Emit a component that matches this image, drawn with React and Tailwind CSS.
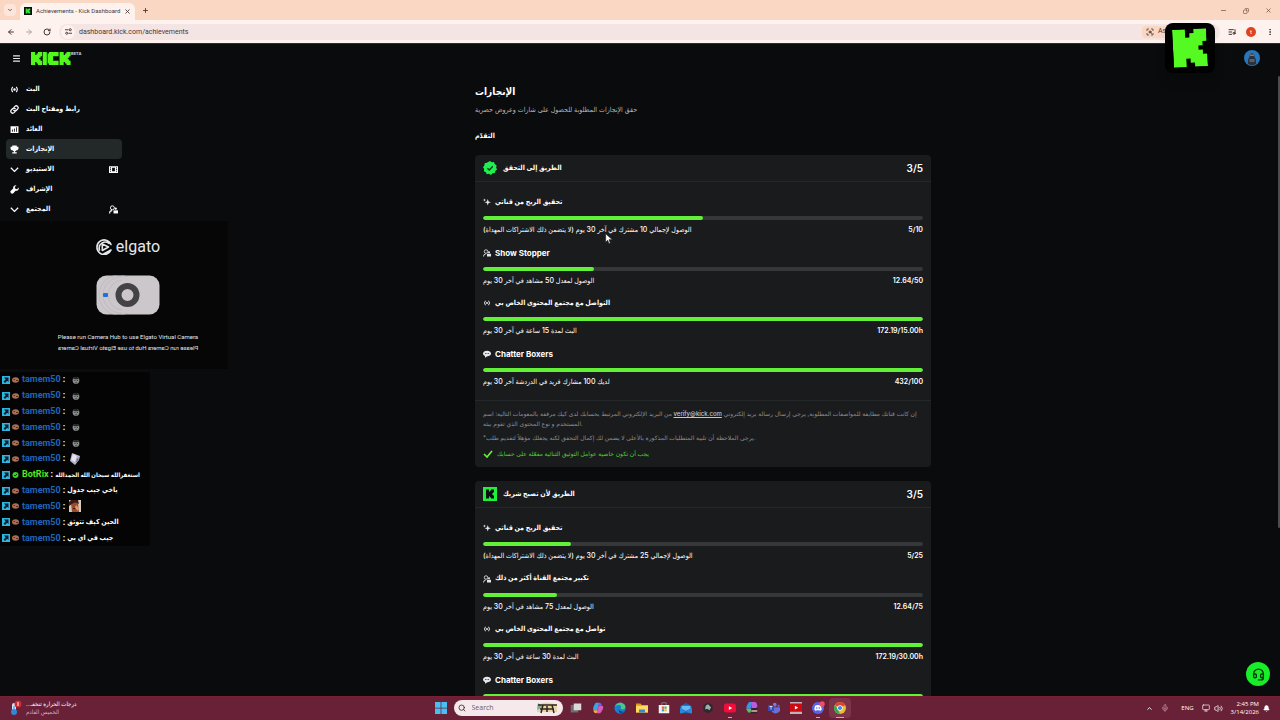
import {
  ArrowLeft, ArrowRight, RotateCw, ChevronDown, ChevronUp, X, Plus, Minus, Menu, Copy, Search,
  Mic, Volume2, Headset, ScanSearch, ListMusic, EllipsisVertical, Monitor, Bell,
} from 'lucide-react';

const K_PATH = 'M0 0h3v2h1V1h1V0h3v3H7v1H6v1h1v1h1v3H5V8H4V7H3v2H0z';

const navItems = [
  { label: 'البث', icon: 'live' },
  { label: 'رابط ومفتاح البث', icon: 'link' },
  { label: 'العائد', icon: 'chart' },
  { label: 'الإنجازات', icon: 'trophy', active: true },
  { label: 'الاستيديو', icon: 'chevron', extra: 'studio' },
  { label: 'الإشراف', icon: 'wrench' },
  { label: 'المجتمع', icon: 'chevron', extra: 'people' },
];

const verifiedTasks = [
  { icon: 'sparkle', title: 'تحقيق الربح من قناتي', text: 'الوصول لإجمالي 10 مشترك في آخر 30 يوم (لا يتضمن ذلك الاشتراكات المهداة)', value: '5/10', percent: 50 },
  { icon: 'people', title: 'Show Stopper', text: 'الوصول لمعدل 50 مشاهد في آخر 30 يوم', value: '12.64/50', percent: 25.28 },
  { icon: 'live', title: 'التواصل مع مجتمع المحتوى الخاص بي', text: 'البث لمدة 15 ساعة في آخر 30 يوم', value: '172.19/15.00h', percent: 100 },
  { icon: 'chat', title: 'Chatter Boxers', text: 'لديك 100 مشارك فريد في الدردشة آخر 30 يوم', value: '432/100', percent: 100 },
];

const partnerTasks = [
  { icon: 'sparkle', title: 'تحقيق الربح من قناتي', text: 'الوصول لإجمالي 25 مشترك في آخر 30 يوم (لا يتضمن ذلك الاشتراكات المهداة)', value: '5/25', percent: 20 },
  { icon: 'people', title: 'تكبير مجتمع القناة أكثر من ذلك', text: 'الوصول لمعدل 75 مشاهد في آخر 30 يوم', value: '12.64/75', percent: 16.85 },
  { icon: 'live', title: 'تواصل مع مجتمع المحتوى الخاص بي', text: 'البث لمدة 30 ساعة في آخر 30 يوم', value: '172.19/30.00h', percent: 100 },
  { icon: 'chat', title: 'Chatter Boxers', percent: 100 },
];

const messages = [
  { emote: 'face' },
  { emote: 'face' },
  { emote: 'face' },
  { emote: 'face' },
  { emote: 'face' },
  { emote: 'paper' },
  { bot: true, text: 'استغفرالله سبحان الله الحمدالله' },
  { text: 'ياخي جيب جدول' },
  { emote: 'photo' },
  { text: 'الحين كيف تتوثق' },
  { text: 'جيب في اي بي' },
];

function Glyph({ name, className }) {
  const shapes = {
    live: (
      <g fill="none" stroke="currentColor" strokeWidth="2">
        <path d="M5 3.500Q1 8 5 12.500M11 3.500Q15 8 11 12.500" />
        <circle cx="8" cy="8" r="1.200" fill="currentColor" />
      </g>
    ),
    link: (
      <g fill="none" stroke="currentColor" strokeWidth="2.200" strokeLinecap="round">
        <path d="M7 4.200l1.800-1.800a3.400 3.400 0 0 1 4.800 4.800L11.500 9.300a3.400 3.400 0 0 1-4.800 0" />
        <path d="M9 11.800l-1.800 1.800a3.400 3.400 0 0 1-4.800-4.800L4.500 6.700a3.400 3.400 0 0 1 4.800 0" />
      </g>
    ),
    chart: (
      <path fill="currentColor" fillRule="evenodd" d="M1 2h14v12H1zM3.500 8v4H5V8zM7 6v6h1.500V6zM11 4v8h1.500V4z" />
    ),
    trophy: (
      <path fill="currentColor" d="M4 1h8v2h3v3c0 2-1.500 3-3.500 3.200-.6 1-1.400 1.600-2.500 1.800v2h3v2H4v-2h3v-2c-1.100-.2-1.900-.8-2.500-1.800C2.500 9 1 8 1 6V3h3z" />
    ),
    chevron: <path fill="none" stroke="currentColor" strokeWidth="2.200" d="M1.500 5 8 11.500 14.500 5" />,
    wrench: (
      <path fill="currentColor" d="M15.500 4.500 12.500 7.500 9.500 6.500 8.500 3.500 11.500.5C8.500-.3 5 2 5.700 6L.5 11 1.500 14.500 5 15.500l5-5.200c4 .7 6.300-2.800 5.500-5.800z" />
    ),
    studio: (
      <path fill="currentColor" fillRule="evenodd" d="M0 2h16v12H0zM2 4v2h1.500V4zM2 7v2h1.500V7zM2 10v2h1.500v-2zM12.500 4v2H14V4zM12.500 7v2H14V7zM12.500 10v2H14v-2zM5.500 5v6h5V5z" />
    ),
    people: (
      <g>
        <circle cx="6" cy="5" r="3.500" fill="none" stroke="currentColor" strokeWidth="1.700" />
        <path d="M1 15q0-5 4.500-5" fill="none" stroke="currentColor" strokeWidth="1.800" />
        <circle cx="12" cy="6.500" r="2" fill="currentColor" />
        <path fill="currentColor" d="M8 9.500h8V15H8z" />
      </g>
    ),
    sparkle: (
      <path fill="currentColor" d="M9.500 2l1.700 4.800L16 8.500l-4.800 1.700L9.500 15l-1.700-4.800L3 8.500l4.800-1.700zM3 1l.8 2.200L6 4l-2.200.8L3 7l-.8-2.200L0 4l2.200-.8z" />
    ),
    chat: (
      <path fill="currentColor" fillRule="evenodd" d="M8 1.500c4.700 0 8 2.300 8 5.700s-3.300 5.600-8 5.600L4 15.500v-3.300C1.500 11.200 0 9.500 0 7.200c0-3.400 3.300-5.700 8-5.700zM4 6.500V8h1.800V6.500zM7 6.500V8h1.800V6.500zM10 6.500V8h1.800V6.500z" />
    ),
  };
  return <svg viewBox="0 0 16 16" className={`shrink-0 ${className}`} aria-hidden="true">{shapes[name]}</svg>;
}

function KickMark({ className }) {
  return (
    <svg viewBox="0 0 14 14" className={className} aria-hidden="true">
      <path fill="#1ef03c" d="M0 0h14v14H0z" />
      <path fill="#0b0e0f" d={K_PATH} transform="translate(3 2.500)" />
    </svg>
  );
}

function BrowserBar() {
  return (
    <header className="shrink-0 text-[#4a3533] font-['Roboto','DejaVu_Sans',sans-serif]">
      <div className="flex h-5 items-end bg-[#fad7c2] pl-1">
        <button aria-label="Search tabs" className="mb-1 flex h-3 w-3 items-center justify-center rounded bg-[#fce6dc]">
          <ChevronDown size={6} strokeWidth={3} />
        </button>
        <div className="ml-1 flex h-[17px] items-center rounded-t-md bg-[#fef2ef] px-1 pb-px">
          <svg viewBox="0 0 14 14" className="size-2"><path fill="#081008" d="M0 0h14v14H0z" /><path fill="#2ee83a" d={K_PATH} transform="translate(3 2.500)" /></svg>
          <span className="ml-1 text-[6px] leading-[10px]">Achievements - Kick Dashboard</span>
          <button aria-label="Close tab" className="ml-1"><X size={7} strokeWidth={3} /></button>
        </div>
        <button aria-label="New tab" className="mb-1.5 ml-[7px]"><Plus size={7} strokeWidth={3} /></button>
        <div className="mb-1.5 ml-auto flex items-center gap-4 pr-2">
          <button aria-label="Minimize"><Minus size={7} /></button>
          <button aria-label="Restore"><Copy size={6} className="-scale-x-100" /></button>
          <button aria-label="Close"><X size={7} /></button>
        </div>
      </div>
      <div className="flex h-6 items-center border-b border-[#253033] bg-[#fef2ef] pl-[7px] pr-1.5">
        <button aria-label="Back"><ArrowLeft size={8} strokeWidth={3} /></button>
        <button aria-label="Forward" className="ml-2.5 text-[#b5a09d]"><ArrowRight size={8} strokeWidth={3} /></button>
        <button aria-label="Reload" className="ml-2.5"><RotateCw size={8} strokeWidth={3} /></button>
        <div className="ml-2 flex h-4 flex-1 items-center rounded-full bg-[#f4e4e3] px-0.5">
          <button aria-label="Site information" className="flex size-3.5 items-center justify-center rounded-full bg-[#fef2ef]">
            <svg viewBox="0 0 12 12" className="size-[7px]" fill="none" stroke="currentColor" strokeWidth="1.600"><path d="M6 3H0M6 9h6" /><circle cx="9" cy="3" r="1.800" /><circle cx="3" cy="9" r="1.800" /></svg>
          </button>
          <input aria-label="Address" readOnly defaultValue="dashboard.kick.com/achievements" className="ml-1 min-w-0 flex-1 bg-transparent text-[7px] leading-[12px] outline-none" />
          <button className="mr-9 flex h-3 w-10 items-center gap-1 overflow-hidden rounded bg-[#fad7c2] px-1 text-[7px]"><ScanSearch size={8} strokeWidth={3} className="shrink-0" />Ask</button>
        </div>
        <button aria-label="Media" className="ml-2"><ListMusic size={8} strokeWidth={3} /></button>
        <button aria-label="Profile" className="ml-2.5 size-2.5 rounded-full bg-[#e0431d] text-[6px] leading-[10px] text-white">t</button>
        <button aria-label="More" className="ml-2.5"><EllipsisVertical size={8} strokeWidth={3} /></button>
      </div>
    </header>
  );
}

function SiteHeader() {
  return (
    <div className="flex h-7 items-center pl-3 pr-5">
      <button aria-label="Menu" className="text-gray-200"><Menu size={9} strokeWidth={3} /></button>
      <a href="#home" aria-label="Kick" className="ml-2.5 flex items-start">
        <svg viewBox="0 0 29 9" preserveAspectRatio="none" className="h-[13px] w-10" fill="#50f81b">
          <path d={K_PATH} />
          <path d="M8.500 0h3v9h-3zM13 0h7v3h-4v3h4v3h-7V8h-1V1h1z" />
          <path d={K_PATH} transform="translate(20.700 0)" />
        </svg>
        <span className="text-[4px] font-bold leading-[4px] text-gray-300">BETA</span>
      </a>
      <button aria-label="Account" className="ml-auto">
        <svg viewBox="0 0 16 16" className="size-4">
          <circle cx="8" cy="8" r="8" fill="#2876bb" />
          <path fill="#2d3038" d="M4 14c-.5-3 .4-6 1.500-7 0-5 5-5 5 0 1.100 1 2 4 1.500 7-2.500 1.500-5.500 1.500-8 0z" />
          <path fill="#8f7466" d="M6 4.500h4V6H6z" />
          <path fill="#55606c" d="M5.500 9h5v3h-5z" />
        </svg>
      </button>
    </div>
  );
}

function Sidebar() {
  return (
    <nav className="w-32 shrink-0 px-1.5 pt-[7px]">
      {navItems.map((item) => (
        <a
          key={item.label}
          href="#nav"
          className={`flex h-5 items-center rounded-sm px-1 text-[7px] font-bold leading-[12px] text-white ${item.active ? 'bg-[#232829]' : ''}`}
        >
          <Glyph name={item.icon} className="size-[9px]" />
          <span className="ml-[7px]">{item.label}</span>
          {item.extra && <Glyph name={item.extra} className="ml-auto size-[9px]" />}
        </a>
      ))}
    </nav>
  );
}

function Task({ task }) {
  return (
    <div>
      <h3 className="flex h-4 items-center gap-1 font-bold text-white">
        <Glyph name={task.icon} className="size-2 text-gray-200" />
        <span className={/[a-z]/.test(task.title) ? 'text-[8px]' : 'text-[7px]'}>{task.title}</span>
      </h3>
      <div role="progressbar" aria-label={task.title} aria-valuenow={task.percent} className="mt-1.5 h-1 overflow-hidden rounded-full bg-[#353738]">
        <div className="h-full rounded-full bg-[#62f136]" style={{ width: `${task.percent}%` }} />
      </div>
      {task.text && (
        <div className="mt-1 flex items-center justify-between text-[7px] leading-[12px] text-white">
          <p className="font-medium">{task.text}</p>
          <p className="font-semibold">{task.value}</p>
        </div>
      )}
    </div>
  );
}

function Card({ icon, title, tasks, children }) {
  return (
    <section className="rounded-sm bg-[#191b1d]">
      <div className="flex h-[27px] items-center border-b border-[#252829] px-2 text-white">
        {icon}
        <h2 className="ml-1.5 text-[7px] font-bold">{title}</h2>
        <span className="ml-auto text-[10px] font-semibold">3/5</span>
      </div>
      <div className="grid min-h-[214px] grid-cols-1 grid-rows-4 px-2 pt-3">
        {tasks.map((task) => <Task key={task.title} task={task} />)}
      </div>
      {children}
    </section>
  );
}

function VerifiedBadge() {
  return (
    <svg viewBox="0 0 16 16" className="size-3.5" aria-hidden="true">
      <path fill="#20ef50" d="M8 0l2 1.500 2.500-.3.900 2.300L15.600 5 15 7.500l1 2.300-1.900 1.600-.6 2.400-2.500.2L9 16l-2.200-1.400-2.400.5-1.200-2.200L1 11.600l.3-2.500L0 7l1.600-1.900.3-2.500 2.500-.5z" />
      <path fill="none" stroke="#10351a" strokeWidth="1.500" d="M5 8.200l2.200 2.100L11.200 6" />
    </svg>
  );
}

function CameraPanel() {
  return (
    <div className="absolute left-0 top-[177px] flex h-[148px] w-[228px] flex-col items-center bg-[#060607] pl-7 pt-4 text-gray-200 font-['Roboto',sans-serif]">
      <div className="flex h-5 items-center gap-1">
        <svg viewBox="0 0 16 16" className="size-4" fill="none" stroke="currentColor" strokeWidth="1.600" strokeLinecap="round" strokeLinejoin="round">
          <path d="M15 5.500A7.300 7.300 0 1 0 15 11L8 14.800M13 4.500A6 6 0 0 0 3.500 11" />
          <path d="M6.300 5v6.500L12.500 8z" />
        </svg>
        <span className="text-[16px] leading-[20px]">elgato</span>
      </div>
      <svg viewBox="0 0 64 40" className="mt-[18px] h-10 w-16">
        <rect x=".5" y=".5" width="63" height="39" rx="10" fill="#cbc7ca" />
        <g fill="none" stroke="#b8b4b7" strokeWidth=".6"><circle cx="27" cy="20" r="15" /><circle cx="25" cy="20" r="18" /><circle cx="23" cy="20" r="20" /></g>
        <path d="M26 2h30q6 6 6 18t-8 18H26z" fill="#cbc7ca" />
        <circle cx="31.500" cy="20" r="9" fill="none" stroke="#434244" strokeWidth="6" />
        <rect x="7" y="18" width="5" height="4" rx="1" fill="#1f6fe0" />
      </svg>
      <p className="mt-4 text-[6px] leading-[11px]">Please run Camera Hub to use Elgato Virtual Camera</p>
      <p className="-scale-x-100 text-[6px] leading-[11px]">Please run Camera Hub to use Elgato Virtual Camera</p>
    </div>
  );
}

function Emote({ name }) {
  if (name === 'face') {
    return (
      <svg viewBox="0 0 12 12" className="ml-1.5 size-2.5">
        <circle cx="6" cy="6.500" r="4" fill="#8e8e8e" />
        <path fill="#252525" d="M2 4q4-4 8 0L8 5H4zM4 6h1.500v1H4zM7 6h1.500v1H7zM4.500 9q2-2 3.500 0z" />
      </svg>
    );
  }
  if (name === 'paper') {
    return (
      <svg viewBox="0 0 12 12" className="ml-1 size-3">
        <path fill="#b6b3c9" d="M3 0l8 3-1 4-4 5-5-4z" />
        <path fill="#e4e2ee" d="M4 1l4 2-2 6-4-2z" />
        <path fill="#77748c" d="M8 5l2 1-3 4z" />
      </svg>
    );
  }
  return (
    <svg viewBox="0 0 12 12" className="ml-1 size-3">
      <path fill="#d8c8bd" d="M0 0h12v12H0z" />
      <path fill="#9c4a2c" d="M2 3q3-4 7 0l1 9H3z" />
      <path fill="#3a1c15" d="M2 0h7l1 4q-4-3-7 0L0 6V2zM4 8h4v1H4z" />
      <path fill="#d99a70" d="M7 5l3 3-1 3-3-3z" />
    </svg>
  );
}

function Chat() {
  return (
    <ul className="absolute left-0 top-[328px] flex h-[174px] w-[150px] flex-col bg-[#040405] pl-0.5 font-['Roboto','DejaVu_Sans_Condensed','DejaVu_Sans',sans-serif]">
      {messages.map((msg, i) => (
        <li key={i} className="flex min-h-0 flex-1 items-center text-[9px] font-bold leading-[15px] text-white">
          <svg viewBox="0 0 8 8" className="size-2 shrink-0"><path fill="#2fb5df" d="M0 0h8v8H0z" /><path fill="#08202c" d="M2 1.500h4.500V6L5.200 4.800 3 7 1.500 5.500l2.200-2z" /></svg>
          {msg.bot ? (
            <svg viewBox="0 0 8 8" className="ml-0.5 size-2 shrink-0"><circle cx="3.500" cy="4" r="3" fill="#39cf26" /><path d="M2 4l1 1 2-2" fill="none" stroke="#0a330a" /></svg>
          ) : (
            <svg viewBox="0 0 8 8" className="ml-0.5 size-2 shrink-0"><ellipse cx="3.500" cy="4" rx="3.500" ry="2.700" fill="#a96f55" /><path d="M1.500 3.500h1.500M4 4.500h2" stroke="#59301f" /></svg>
          )}
          <span className={`ml-0.5 ${msg.bot ? 'text-[#53ea20]' : 'text-[#1f64b9]'}`}>{msg.bot ? 'BotRix' : 'tamem50'}</span>
          <span className="ml-0.5">:</span>
          {msg.emote ? <Emote name={msg.emote} /> : <span className={`ml-0.5 whitespace-nowrap ${msg.bot ? 'text-[6px]' : 'text-[7px]'}`}>{msg.text}</span>}
        </li>
      ))}
    </ul>
  );
}

function AppIcon({ name }) {
  const art = {
    windows: <path fill="#49bff2" d="M0 0h7.500v7.500H0zM8.500 0H16v7.500H8.500zM0 8.500h7.500V16H0zM8.500 8.500H16V16H8.500z" />,
    tasks: <g><path fill="#6d6d72" d="M1 4h10v10H1z" /><path fill="#dadada" d="M5 2h10v9H5z" /></g>,
    copilot: <g><path fill="#37a5ec" d="M5 1h5L7 11H2Q0 8 5 1z" /><path fill="#f3b33f" d="M2 11h6l-2 4q-4 0-4-4z" /><path fill="#d95ab8" d="M9 5h5q3 2-3 10H6z" /><path fill="#6d65ee" d="M9 1q4 0 4 4H8z" /></g>,
    edge: <g><circle cx="8" cy="8" r="7.500" fill="#1780cf" /><path fill="#48c985" d="M1 6Q4 0 10 1q6 2 5 7-2 3-6 1 2-5-3-5-3 0-5 2z" /><path fill="#0b3f80" d="M6 8q0 5 7 5-7 5-7-5z" /></g>,
    folder: <g><path fill="#d99b1c" d="M0 2h6l2 2h8v10H0z" /><path fill="#ffd85e" d="M0 5h16v9H0z" /><path fill="#3889cf" d="M4 10h8v4H4z" /></g>,
    store: <g><path fill="#f6f4f5" d="M1 4h14v11H1z" /><path d="M5 4V1h6v3" stroke="#8d8b90" fill="none" /><path fill="#e85a3a" d="M5 6h3v3H5z" /><path fill="#65ac40" d="M8.500 6h3v3h-3z" /><path fill="#359bdc" d="M5 9.500h3v3H5z" /><path fill="#f4bc35" d="M8.500 9.500h3v3h-3z" /></g>,
    mail: <g><path fill="#1c5fae" d="M0 6l8-5 8 5v9H0z" /><path fill="#64bbf2" d="M2 5h12v4l-6 3-6-3z" /><path fill="#2f87db" d="M0 8l8 5-6 2H0zM16 8l-8 5 6 2h2z" /></g>,
    dark: <g><path fill="#272a2e" d="M8 1l6 3v8l-6 3-6-3V4z" /><path fill="#a6acae" d="M8 3l4 4-2 4-3-2-3 1 1-5z" /></g>,
    youtube: <g><rect y="2" width="16" height="12" rx="3" fill="#ef0e3a" /><path fill="#fff" d="M6.500 5.500v5L11 8z" /></g>,
    office: <g><path fill="#3c91e8" d="M4 0h5L6 9H1q-2-2 3-9z" /><path fill="#b75de4" d="M8 0h4q3 1 3 6l-3 4H7z" /><path fill="#55c06b" d="M0 9h7l-1 5H3z" /><path fill="#2d2730" d="M7 8h8v7H7z" /><path fill="#eab7a6" d="M7 11h8v2H7z" /></g>,
    teams: <g><circle cx="9" cy="3.500" r="2.500" fill="#767ee6" /><circle cx="14" cy="5" r="1.500" fill="#6269cf" /><path fill="#6670d8" d="M5 7h11v5q-5 6-11 1z" /><path fill="#3b48ae" d="M0 4h8v8H0z" /><path stroke="#fff" d="M2 6h4M4 6v4" /></g>,
    tv: <g><path fill="#b9b4b7" d="M0 0h16v16H0z" /><path fill="#ce0910" d="M0 2h16v11H0z" /><path fill="#fff" d="M6.500 5v5L11 7.500z" /></g>,
    discord: <g><circle cx="8" cy="8" r="8" fill="#5a64ea" /><path fill="#fff" d="M4 5q4-2 8 0l1 5-2 2-1-1H6l-1 1-2-2z" /><circle cx="6.300" cy="8" r="1" fill="#5a64ea" /><circle cx="9.700" cy="8" r="1" fill="#5a64ea" /><circle cx="13.500" cy="2.500" r="3.500" fill="#ed5062" /></g>,
    chrome: <g><circle cx="8" cy="8" r="8" fill="#e8bd2e" /><path fill="#df4334" d="M8 8L1 4q3-4 7-4 5 0 7 4z" /><path fill="#3aa65b" d="M1 4l4.500 6L8 16Q0 15 0 8q0-2 1-4z" /><circle cx="8" cy="8" r="3.700" fill="#fff" /><circle cx="8" cy="8" r="2.800" fill="#4488ee" /></g>,
  };
  return <svg viewBox="0 0 16 16" className="size-3 overflow-visible" aria-hidden="true">{art[name]}</svg>;
}

const apps = ['tasks', 'copilot', 'edge', 'folder', 'store', 'mail', 'dark', 'youtube', 'office', 'teams', 'tv', 'discord', 'chrome'];
const running = { youtube: 'w-1', discord: 'w-1', chrome: 'w-2' };

function Taskbar() {
  return (
    <footer className="grid h-6 shrink-0 grid-cols-[1fr_auto_1fr] items-center border-t border-[#7a2035] bg-[#692138] pb-px text-white font-['Open_Sans','DejaVu_Sans_Condensed','DejaVu_Sans',sans-serif]">
      <div className="flex items-center pl-2.5">
        <svg viewBox="0 0 12 16" className="h-4 w-3">
          <rect x="2" y="3" width="4" height="9" rx="2" fill="#cfe2f3" /><circle cx="4" cy="12" r="3" fill="#3287d8" /><path d="M4 6v6" stroke="#3287d8" /><circle cx="8" cy="4" r="3.500" fill="#d02a2e" /><path stroke="#fff" d="M8 2v4" />
        </svg>
        <div className="ml-1 text-[6px] leading-[8px]">
          <p dir="rtl">درجات الحرارة تنخفـ...</p>
          <p className="text-[#dfa9b5]">الخميس القادم</p>
        </div>
      </div>
      <div className="flex items-center">
        <button aria-label="Start" className="flex w-[22px] justify-center"><AppIcon name="windows" /></button>
        <label className="mx-0.5 flex h-4 w-[109px] items-center rounded-full bg-[#f5e9ec] pl-1 pr-1 text-[#3b2a30]">
          <Search size={8} strokeWidth={2.500} />
          <input aria-label="Search" placeholder="Search" className="ml-1.5 w-0 min-w-0 flex-1 bg-transparent text-[7px] leading-[12px] outline-none placeholder:text-[#6d595f]" />
          <svg viewBox="0 0 24 12" className="h-3 w-6"><path fill="#e9d6a6" d="M2 3q10-5 20 0v7H2z" /><path fill="#7cb09d" d="M3 1l5 4-6 3z" /><path stroke="#30261f" strokeWidth="1.500" fill="none" d="M3 3h19M8 3l-2 8M12 4v6M17 3l2 8M5 7h14" /></svg>
        </label>
        {apps.map((app) => (
          <button key={app} aria-label={app} className={`relative flex h-5 w-[22px] items-center justify-center rounded-sm ${app === 'chrome' ? 'bg-[#7b3449]' : ''}`}>
            <AppIcon name={app} />
            {running[app] && <span className={`absolute bottom-0 h-px bg-[#d9a5b1] ${running[app]}`} />}
          </button>
        ))}
      </div>
      <div className="flex items-center justify-end pr-2.5 text-[6px]">
        <button aria-label="Hidden icons"><ChevronUp size={7} strokeWidth={3} /></button>
        <Mic size={8} className="ml-2 text-[#d3a0aa]" />
        <span className="ml-3">ENG</span>
        <Monitor size={8} className="ml-2" />
        <Volume2 size={9} className="ml-1" />
        <div className="ml-2 text-right leading-[8px]">
          <p>2:45 PM</p>
          <p>3/14/2026</p>
        </div>
        <Bell size={7} fill="currentColor" className="ml-1" />
      </div>
    </footer>
  );
}

export default function App() {
  return (
    <div className="relative flex h-screen flex-col overflow-hidden bg-[#0a0b0d] font-['Inter','DejaVu_Sans_Condensed','DejaVu_Sans',sans-serif]">
      <BrowserBar />
      <div className="relative min-h-0 flex-1 overflow-hidden">
        <SiteHeader />
        <div className="flex">
          <Sidebar />
          <main className="min-w-0 flex-1 pr-0.5 pt-[11px]">
            <div className="mx-auto max-w-[456px]">
              <h1 className="text-[10px] font-bold leading-[16px] text-white">الإنجازات</h1>
              <p className="mt-1 text-[7px] leading-[14px] text-[#b4b8bb]">حقق الإنجازات المطلوبة للحصول على شارات وعروض حصرية</p>
              <h2 className="mt-3 text-[7px] font-bold leading-[14px] text-white">التقدّم</h2>
              <div className="mt-3 flex flex-col gap-3.5">
                <Card icon={<VerifiedBadge />} title="الطريق إلى التحقق" tasks={verifiedTasks}>
                  <div className="mt-1 border-t border-[#252829] px-2 pb-2 pt-2 text-[6px] leading-[10px] text-[#8b8f92] font-['Inter','DejaVu_Sans',sans-serif]">
                    <p dir="rtl" className="text-left">
                      إن كانت قناتك مطابقة للمواصفات المطلوبة, يرجى إرسال رسالة بريد إلكتروني <a href="mailto:verify@kick.com" className="font-medium text-[#c5c9cc] underline">verify@kick.com</a> من البريد الإلكتروني المرتبط بحسابك لدى كيك مرفقة بالمعومات التالية: اسم
                    </p>
                    <p>المستخدم و نوع المحتوى الذي تقوم ببثه.</p>
                    <p className="mt-1">*يرجى الملاحظة أن تلبية المتطلبات المذكورة بالأعلى لا يضمن لك إكمال التحقق لكنه يجعلك مؤهلاً لتقديم طلب.</p>
                    <p className="mt-1.5 flex items-center gap-1 text-[#4fd52f]">
                      <svg viewBox="0 0 10 10" className="size-2.5"><path d="M1 5l3 3 5-6" fill="none" stroke="#62f136" strokeWidth="1.700" /></svg>
                      يجب أن تكون خاصية عوامل التوثيق الثنائية مفعّلة على حسابك
                    </p>
                  </div>
                </Card>
                <Card icon={<KickMark className="size-3.5" />} title="الطريق لأن تصبح شريك" tasks={partnerTasks} />
              </div>
            </div>
          </main>
        </div>
        <CameraPanel />
        <Chat />
        <div className="absolute right-0 top-8 h-[452px] w-0.5 rounded bg-[#4b4d50]" />
        <button aria-label="Support" className="absolute bottom-2.5 right-2.5 flex size-6 items-center justify-center rounded-full bg-[#18ee27] text-[#07330a]">
          <Headset size={13} strokeWidth={2.500} />
        </button>
        <svg viewBox="0 0 12 18" className="absolute left-[605px] top-[189px] h-3 w-2"><path fill="#fff" stroke="#222" d="M1 1v13l3-3 2 5 2-1-2-5h5z" /></svg>
      </div>
      <Taskbar />
      {/* stream sticker, floats over the browser chrome */}
      <div className="absolute right-[65px] top-[23px] flex size-[50px] items-center justify-center rounded-lg bg-black shadow-lg">
        <svg viewBox="0 0 8 9" preserveAspectRatio="none" className="h-[38px] w-[34px] -rotate-3"><path fill="#55fa23" d={K_PATH} /></svg>
      </div>
    </div>
  );
}
